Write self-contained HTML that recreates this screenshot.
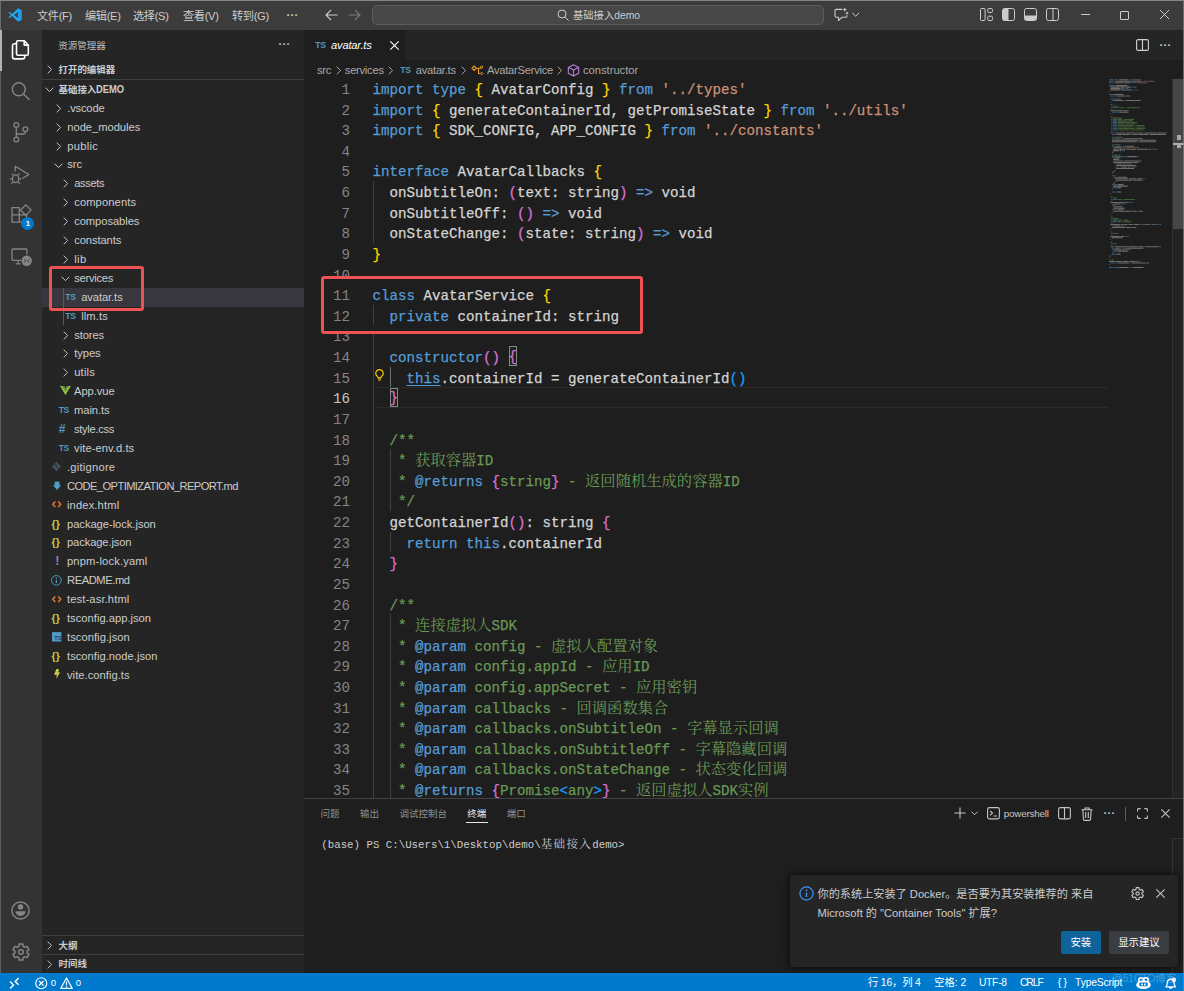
<!DOCTYPE html><html lang="zh-CN"><head><meta charset="utf-8"><title>avatar.ts - 基础接入demo</title><style>
*{box-sizing:border-box;margin:0;padding:0}
html,body{width:1184px;height:991px;overflow:hidden;background:#1e1e1e}
body{position:relative;font-family:"Liberation Sans","Noto Sans CJK SC",sans-serif;font-size:11.17px;color:#cccccc;-webkit-font-smoothing:antialiased}
.abs{position:absolute}
.t{position:absolute;white-space:pre;line-height:1}
svg{position:absolute;overflow:visible}
#titlebar{position:absolute;left:0;top:0;width:1184px;height:30px;background:#3c3c3c;border-top:1px solid #868686}
#activity{position:absolute;left:0;top:30px;width:42px;height:943px;background:#333333}
#sidebar{position:absolute;left:42px;top:30px;width:262px;height:943px;background:#252526}
#tabs{position:absolute;left:304px;top:30px;width:880px;height:30px;background:#252526}
#editor{position:absolute;left:304px;top:60px;width:880px;height:738px;background:#1e1e1e;overflow:hidden}
#panel{position:absolute;left:304px;top:798px;width:880px;height:174px;background:#1e1e1e;border-top:1px solid #424242}
#status{position:absolute;left:0;top:973px;width:1184px;height:18px;background:#007acc;color:#fff}
.menu{color:#cccccc;font-size:11.2px;letter-spacing:-0.35px}
.row{position:absolute;left:0;width:262px;height:18.9px}
.lbl{position:absolute;top:0;line-height:18.9px;white-space:pre;font-size:11.17px;color:#cccccc}
.code{position:absolute;left:68.6px;white-space:pre;font-family:"Liberation Mono","Noto Serif CJK SC",monospace;font-size:14.17px;line-height:20.6px;height:20.6px;color:#d4d4d4;-webkit-text-stroke:0.25px currentColor}
.ln{position:absolute;left:0;width:46px;text-align:right;font-family:"Liberation Mono",monospace;font-size:14.17px;line-height:20.6px;height:20.6px;color:#858585}
.k{color:#569cd6}.s{color:#ce9178}.c{color:#6a9955}.b1{color:#ffd700}.b2{color:#da70d6}.b3{color:#179fff}
.bm{outline:1px solid #888888;outline-offset:-1px;background:rgba(0,100,0,0.1);display:inline-block;height:19.6px;line-height:19.6px;vertical-align:top;margin-top:-1.6px;padding-top:1.6px}
.cj{font-family:"Liberation Mono","Noto Serif CJK SC",serif;font-size:15.3px;line-height:1;-webkit-text-stroke:0}
.ts{position:absolute;font-family:"Liberation Sans",sans-serif;font-weight:bold;font-size:8.5px;color:#519aba;line-height:18.9px;letter-spacing:-0.3px}
</style></head><body>
<div id="titlebar">
<svg style="left:7.5px;top:7px" width="14" height="14" viewBox="0 0 100 100"><path d="M71 3 L29 43 L11 29 L3 33 L21 50 L3 67 L11 71 L29 57 L71 97 L96 86 L96 14 Z M71 28 L71 72 L42 50 Z" fill="#23a9f2" fill-rule="evenodd"/><path d="M71 3 L96 14 L96 86 L71 97 Z" fill="#1f9cf0"/></svg>
<span class="t menu" style="left:37px;top:9.9px">文件(F)</span>
<span class="t menu" style="left:85px;top:9.9px">编辑(E)</span>
<span class="t menu" style="left:133px;top:9.9px">选择(S)</span>
<span class="t menu" style="left:183px;top:9.9px">查看(V)</span>
<span class="t menu" style="left:232px;top:9.9px">转到(G)</span>
<span class="t menu" style="left:286.5px;top:9px;letter-spacing:0.3px;font-weight:bold">···</span>
<svg style="left:325px;top:8px" width="13" height="12" viewBox="0 0 13 12"><path d="M12.5 6H1M6 1L1 6l5 5" fill="none" stroke="#cccccc" stroke-width="1.1"/></svg>
<svg style="left:348px;top:8px" width="13" height="12" viewBox="0 0 13 12"><path d="M0.5 6H12M7 1l5 5-5 5" fill="none" stroke="#7a7a7a" stroke-width="1.1"/></svg>
<div class="abs" style="left:372px;top:4px;width:452px;height:20px;border:1px solid #5c5c5c;border-radius:5px;background:#474747"></div>
<svg style="left:557px;top:8px" width="12" height="12" viewBox="0 0 12 12"><circle cx="5" cy="5" r="4" fill="none" stroke="#cccccc" stroke-width="1"/><path d="M8 8l3.5 3.5" stroke="#cccccc" stroke-width="1"/></svg>
<span class="t" style="left:573px;top:9.5px;font-size:10.3px;color:#cccccc">基础接入demo</span>
<svg style="left:834px;top:6.3px" width="26" height="15" viewBox="0 0 26 15"><path d="M8.3 2.4H2.2a1.2 1.2 0 0 0-1.2 1.2v5.5a1.2 1.2 0 0 0 1.2 1.2h2.3v3.2l3.4-3.2h3.9a1.2 1.2 0 0 0 1.2-1.2V8.3" fill="none" stroke="#cccccc" stroke-width="1.1" stroke-linejoin="round"/><path d="M10.8 0.6l.6 1.5 1.5.6-1.5.6-.6 1.5-.6-1.5-1.5-.6 1.5-.6zM13 4.3l.5 1.3 1.3.5-1.3.5-.5 1.3-.5-1.3-1.3-.5 1.3-.5z" fill="#e0e0e0"/><path d="M18.3 5.9l3.4 3.3 3.4-3.3" fill="none" stroke="#cccccc" stroke-width="1"/></svg>
<svg style="left:979.5px;top:6.8px" width="13" height="13" viewBox="0 0 13 13"><rect x="0.5" y="0.5" width="4.6" height="12" rx="1" fill="none" stroke="#cccccc"/><rect x="7.8" y="0.5" width="4.6" height="4" rx="1" fill="none" stroke="#cccccc"/><rect x="7.8" y="8.2" width="4.6" height="4.3" rx="1" fill="none" stroke="#cccccc"/></svg>
<svg style="left:1001.8px;top:6.8px" width="13" height="13" viewBox="0 0 13 13"><rect x="0.5" y="0.5" width="12" height="12" rx="2" fill="none" stroke="#cccccc"/><path d="M1 2a1.5 1.5 0 0 1 1.5-1.5H6.5v12H2.5A1.5 1.5 0 0 1 1 11z" fill="#cccccc"/></svg>
<svg style="left:1024px;top:6.8px" width="13" height="13" viewBox="0 0 13 13"><rect x="0.5" y="0.5" width="12" height="12" rx="2" fill="none" stroke="#cccccc"/><path d="M0.5 7.5h12v3a1.5 1.5 0 0 1-1.5 1.5H2a1.5 1.5 0 0 1-1.5-1.5z" fill="#cccccc"/></svg>
<svg style="left:1046.4px;top:6.8px" width="13" height="13" viewBox="0 0 13 13"><rect x="0.5" y="0.5" width="12" height="12" rx="2" fill="none" stroke="#cccccc"/><path d="M7 0.5v12" stroke="#cccccc"/></svg>
<div class="abs" style="left:1081px;top:13px;width:9px;height:1px;background:#cccccc"></div>
<div class="abs" style="left:1120.3px;top:9.6px;width:9px;height:9px;border:1px solid #cccccc;border-radius:1px"></div>
<svg style="left:1160px;top:9.4px" width="9" height="9" viewBox="0 0 9 9"><path d="M0 0l9 9M9 0l-9 9" stroke="#cccccc" stroke-width="1"/></svg>
</div>
<div class="abs" style="left:0;top:1px;width:1px;height:29px;background:#6a6a6a"></div>
<div id="activity">
<div class="abs" style="left:0;top:0;width:1px;height:943px;background:#5e5e5e"></div><div class="abs" style="left:0;top:0;width:2px;height:41px;background:#b4b4b4"></div>
<svg style="left:11px;top:9px" width="19" height="22" viewBox="0 0 19 22"><path d="M7 1.8h6.3l4 4.2v8.9a1.3 1.3 0 0 1-1.3 1.3H7a1.5 1.5 0 0 1-1.5-1.5V3.3A1.5 1.5 0 0 1 7 1.8zM13.2 2v4.1h4" fill="none" stroke="#ffffff" stroke-width="1.6" stroke-linejoin="round"/><path d="M5.3 4.7H3.6a2.1 2.1 0 0 0-2.1 2.1v11a2.1 2.1 0 0 0 2.1 2.1h8a2.1 2.1 0 0 0 2.1-2.1v-1.5" fill="none" stroke="#ffffff" stroke-width="1.6"/></svg>
<svg style="left:10px;top:50px" width="22" height="22" viewBox="10 50 22 22"><circle cx="18.8" cy="59.3" r="6.5" fill="none" stroke="#858585" stroke-width="1.4"/><path d="M23.5 64l6.1 6.1" stroke="#858585" stroke-width="1.4"/></svg>
<svg style="left:10px;top:90px" width="22" height="24" viewBox="10 90 22 24"><circle cx="16.3" cy="95" r="2.4" fill="none" stroke="#858585" stroke-width="1.3"/><circle cx="16.3" cy="109.6" r="2.4" fill="none" stroke="#858585" stroke-width="1.3"/><circle cx="25.4" cy="99.3" r="2.4" fill="none" stroke="#858585" stroke-width="1.3"/><path d="M16.3 97.4v9.8M25.4 101.7v0.3a2 2 0 0 1-2 2H16.3" fill="none" stroke="#858585" stroke-width="1.3"/></svg>
<svg style="left:9px;top:135px" width="22" height="20" viewBox="0 0 22 20"><path d="M6.2 6.5V1.2l13.6 8.3-6.5 4" fill="none" stroke="#858585" stroke-width="1.3" stroke-linejoin="round"/><ellipse cx="6.6" cy="13.8" rx="3.1" ry="3.9" fill="none" stroke="#858585" stroke-width="1.3"/><path d="M4.2 10.2L2.6 8.6M9 10.2l1.6-1.6M3.4 13.8H0.8M12.4 13.8H9.8M4 16.8l-1.8 1.8M9.2 16.8l1.8 1.8" stroke="#858585" stroke-width="1.2" fill="none"/></svg>
<svg style="left:11px;top:174px" width="22" height="22" viewBox="0 0 22 22"><path d="M1 3.6h7.3v7.3H1zM1 10.9h7.3v7.3H1zM8.3 10.9h7.3v7.3H8.3z" fill="none" stroke="#858585" stroke-width="1.3"/><path d="M14.8 0.9l5.2 5.2-5.2 5.2-5.2-5.2z" fill="none" stroke="#858585" stroke-width="1.3"/></svg>
<div class="abs" style="left:20.7px;top:186.5px;width:13.6px;height:13.6px;border-radius:7px;background:#007acc"></div>
<span class="t" style="left:25.7px;top:189.5px;font-size:7.8px;font-weight:bold;color:#fff">1</span>
<svg style="left:10.5px;top:218px" width="22" height="19" viewBox="0 0 22 19"><path d="M10 12.4H2.2A1.2 1.2 0 0 1 1 11.2V2.2A1.2 1.2 0 0 1 2.2 1h12.6A1.2 1.2 0 0 1 16 2.2V6.5M4.5 15.8h5M7.2 12.5v3.2" fill="none" stroke="#858585" stroke-width="1.3"/><circle cx="15.7" cy="12.8" r="5.2" fill="#858585"/><path d="M13.2 11.2l1.7 1.6-1.7 1.6M18.2 11.2l-1.7 1.6 1.7 1.6" fill="none" stroke="#333" stroke-width="0.9"/></svg>
<svg style="left:11.3px;top:870.7px" width="19" height="19" viewBox="0 0 19 19"><circle cx="9.5" cy="9.5" r="8.6" fill="none" stroke="#858585" stroke-width="1.5"/><circle cx="9.5" cy="6" r="2.7" fill="#858585"/><path d="M4.4 10.3h10.2a5.1 4.7 0 0 1-10.2 0z" fill="#858585"/></svg>
<svg style="left:11.6px;top:912.9px" width="18" height="18" viewBox="0 0 18 18"><path d="M6.81 3.31L7.13 0.91L10.87 0.91L11.19 3.31L12.84 4.26L15.07 3.34L16.94 6.57L15.02 8.05L15.02 9.95L16.94 11.43L15.07 14.66L12.84 13.74L11.19 14.69L10.87 17.09L7.13 17.09L6.81 14.69L5.16 13.74L2.93 14.66L1.06 11.43L2.98 9.95L2.98 8.05L1.06 6.57L2.93 3.34L5.16 4.26z" fill="none" stroke="#858585" stroke-width="1.5" stroke-linejoin="round"/><circle cx="9" cy="9" r="2.3" fill="none" stroke="#858585" stroke-width="1.4"/></svg>
</div>
<div id="sidebar">
<span class="t" style="left:16.3px;top:11px;font-size:9.5px;color:#bbbbbb">资源管理器</span>
<span class="t" style="left:236.5px;top:8.5px;font-size:11px;color:#c5c5c5;letter-spacing:0.3px;font-weight:bold">···</span>
<svg style="left:5px;top:35px" width="6" height="9" viewBox="0 0 6 9"><path d="M0.7 0.6l3.9 3.9-3.9 3.9" fill="none" stroke="#c5c5c5" stroke-width="1"/></svg>
<span class="t" style="left:16.5px;top:34.8px;font-size:9.45px;font-weight:bold;color:#cccccc">打开的编辑器</span>
<div class="abs" style="left:0;top:49px;width:262px;height:1px;background:#3f3f41"></div>
<svg style="left:2.6px;top:56.7px" width="9" height="6" viewBox="0 0 9 6"><path d="M0.6 0.7l3.9 3.9 3.9-3.9" fill="none" stroke="#c5c5c5" stroke-width="1"/></svg>
<span class="t" style="left:16.5px;top:54.2px;font-size:9.45px;font-weight:bold;color:#cccccc">基础接入<span style="display:inline-block;font-size:10.9px;transform:scaleX(0.86);transform-origin:left bottom;line-height:1">DEMO</span></span>
<div class="row" style="top:68.7px;">
<svg style="left:14px;top:5px" width="6" height="9" viewBox="0 0 6 9"><path d="M0.7 0.6l3.9 3.9-3.9 3.9" fill="none" stroke="#c5c5c5" stroke-width="1"/></svg>
<span class="lbl" style="left:25.3px;letter-spacing:-0.19px">.vscode</span>
</div>
<div class="row" style="top:87.6px;">
<svg style="left:14px;top:5px" width="6" height="9" viewBox="0 0 6 9"><path d="M0.7 0.6l3.9 3.9-3.9 3.9" fill="none" stroke="#c5c5c5" stroke-width="1"/></svg>
<span class="lbl" style="left:25.3px;letter-spacing:-0.02px">node_modules</span>
</div>
<div class="row" style="top:106.5px;">
<svg style="left:14px;top:5px" width="6" height="9" viewBox="0 0 6 9"><path d="M0.7 0.6l3.9 3.9-3.9 3.9" fill="none" stroke="#c5c5c5" stroke-width="1"/></svg>
<span class="lbl" style="left:25.3px;letter-spacing:0.28px">public</span>
</div>
<div class="row" style="top:125.4px;">
<svg style="left:11.6px;top:7.2px" width="9" height="6" viewBox="0 0 9 6"><path d="M0.6 0.7l3.9 3.9 3.9-3.9" fill="none" stroke="#c5c5c5" stroke-width="1"/></svg>
<span class="lbl" style="left:25.3px;letter-spacing:-0.1px">src</span>
</div>
<div class="row" style="top:144.3px;">
<svg style="left:20.9px;top:5px" width="6" height="9" viewBox="0 0 6 9"><path d="M0.7 0.6l3.9 3.9-3.9 3.9" fill="none" stroke="#c5c5c5" stroke-width="1"/></svg>
<span class="lbl" style="left:32.2px;letter-spacing:-0.35px">assets</span>
</div>
<div class="row" style="top:163.2px;">
<svg style="left:20.9px;top:5px" width="6" height="9" viewBox="0 0 6 9"><path d="M0.7 0.6l3.9 3.9-3.9 3.9" fill="none" stroke="#c5c5c5" stroke-width="1"/></svg>
<span class="lbl" style="left:32.2px;letter-spacing:0.12px">components</span>
</div>
<div class="row" style="top:182.1px;">
<svg style="left:20.9px;top:5px" width="6" height="9" viewBox="0 0 6 9"><path d="M0.7 0.6l3.9 3.9-3.9 3.9" fill="none" stroke="#c5c5c5" stroke-width="1"/></svg>
<span class="lbl" style="left:32.2px;letter-spacing:-0.05px">composables</span>
</div>
<div class="row" style="top:201px;">
<svg style="left:20.9px;top:5px" width="6" height="9" viewBox="0 0 6 9"><path d="M0.7 0.6l3.9 3.9-3.9 3.9" fill="none" stroke="#c5c5c5" stroke-width="1"/></svg>
<span class="lbl" style="left:32.2px;letter-spacing:-0.08px">constants</span>
</div>
<div class="row" style="top:219.9px;">
<svg style="left:20.9px;top:5px" width="6" height="9" viewBox="0 0 6 9"><path d="M0.7 0.6l3.9 3.9-3.9 3.9" fill="none" stroke="#c5c5c5" stroke-width="1"/></svg>
<span class="lbl" style="left:32.2px;letter-spacing:0.37px">lib</span>
</div>
<div class="row" style="top:238.8px;">
<svg style="left:18.5px;top:7.2px" width="9" height="6" viewBox="0 0 9 6"><path d="M0.6 0.7l3.9 3.9 3.9-3.9" fill="none" stroke="#c5c5c5" stroke-width="1"/></svg>
<span class="lbl" style="left:32.2px;letter-spacing:-0.27px">services</span>
</div>
<div class="row" style="top:257.7px;background:#37373d;">
<span class="ts" style="left:23.3px;top:0.3px">TS</span>
<span class="lbl" style="left:39.2px;letter-spacing:-0.08px">avatar.ts</span>
</div>
<div class="row" style="top:276.6px;">
<span class="ts" style="left:23.3px;top:0.3px">TS</span>
<span class="lbl" style="left:39.2px;letter-spacing:0.1px">llm.ts</span>
</div>
<div class="row" style="top:295.5px;">
<svg style="left:20.9px;top:5px" width="6" height="9" viewBox="0 0 6 9"><path d="M0.7 0.6l3.9 3.9-3.9 3.9" fill="none" stroke="#c5c5c5" stroke-width="1"/></svg>
<span class="lbl" style="left:32.2px;letter-spacing:-0.08px">stores</span>
</div>
<div class="row" style="top:314.4px;">
<svg style="left:20.9px;top:5px" width="6" height="9" viewBox="0 0 6 9"><path d="M0.7 0.6l3.9 3.9-3.9 3.9" fill="none" stroke="#c5c5c5" stroke-width="1"/></svg>
<span class="lbl" style="left:32.2px;letter-spacing:-0.04px">types</span>
</div>
<div class="row" style="top:333.3px;">
<svg style="left:20.9px;top:5px" width="6" height="9" viewBox="0 0 6 9"><path d="M0.7 0.6l3.9 3.9-3.9 3.9" fill="none" stroke="#c5c5c5" stroke-width="1"/></svg>
<span class="lbl" style="left:32.2px;letter-spacing:0.2px">utils</span>
</div>
<div class="row" style="top:352.2px;">
<svg style="left:17.9px;top:3.8px" width="10.9" height="9.1" viewBox="0 0 12 10"><path d="M0 0h2.6L6 5.8 9.4 0H12L6 10z" fill="#8dc149"/><path d="M2.6 0h2L6 2.4 7.4 0h2L6 5.8z" fill="#6a9a36"/></svg>
<span class="lbl" style="left:32.1px;letter-spacing:-0.06px">App.vue</span>
</div>
<div class="row" style="top:371.1px;">
<span class="ts" style="left:16.700000000000003px;top:0.3px">TS</span>
<span class="lbl" style="left:32.1px;letter-spacing:-0.09px">main.ts</span>
</div>
<div class="row" style="top:390px;">
<span class="abs" style="left:16.8px;top:0;line-height:18.9px;font-size:12px;font-weight:bold;color:#519aba;font-family:"Liberation Sans",sans-serif;white-space:pre;font-style:italic;top:-0.3px;transform:scaleX(1.15);transform-origin:left">#</span>
<span class="lbl" style="left:32.1px;letter-spacing:-0.33px">style.css</span>
</div>
<div class="row" style="top:408.9px;">
<span class="ts" style="left:16.700000000000003px;top:0.3px">TS</span>
<span class="lbl" style="left:32.1px;letter-spacing:0.06px">vite-env.d.ts</span>
</div>
<div class="row" style="top:427.8px;">
<svg style="left:10px;top:4.5px" width="9.1" height="9.1" viewBox="0 0 10 10"><path d="M5 0l5 5-5 5-5-5z" fill="#43565f"/><circle cx="3.8" cy="3.7" r="0.9" fill="#252526"/><circle cx="6.3" cy="6.2" r="0.9" fill="#252526"/><path d="M3.8 3.7l2.5 2.5M5 5V2.6" stroke="#252526" stroke-width="0.7"/></svg>
<span class="lbl" style="left:25px;letter-spacing:0.24px">.gitignore</span>
</div>
<div class="row" style="top:446.7px;">
<svg style="left:10.7px;top:4.4px" width="8.1" height="9.1" viewBox="0 0 8 9"><path d="M1.6 0l1.2 1.3L4 0l1.2 1.3L6.4 0v4.2H8L4 9 0 4.2h1.6z" fill="#4f9fc9"/></svg>
<span class="lbl" style="left:25px;letter-spacing:-0.59px">CODE_OPTIMIZATION_REPORT.md</span>
</div>
<div class="row" style="top:465.6px;">
<svg style="left:10px;top:5.7px" width="9.5" height="6.4" viewBox="0 0 9.5 6.4"><path d="M3.3 0.5L0.8 3.2l2.5 2.7M6.2 0.5L8.7 3.2 6.2 5.9" fill="none" stroke="#e37933" stroke-width="1.5"/></svg>
<span class="lbl" style="left:25px;letter-spacing:0.14px">index.html</span>
</div>
<div class="row" style="top:484.5px;">
<span class="abs" style="left:9.6px;top:0;line-height:18.9px;font-size:10.5px;font-weight:bold;color:#cbcb41;font-family:"Liberation Sans",sans-serif;white-space:pre;letter-spacing:1.8px;top:-0.8px">{}</span>
<span class="lbl" style="left:25px;letter-spacing:-0.03px">package-lock.json</span>
</div>
<div class="row" style="top:503.4px;">
<span class="abs" style="left:9.6px;top:0;line-height:18.9px;font-size:10.5px;font-weight:bold;color:#cbcb41;font-family:"Liberation Sans",sans-serif;white-space:pre;letter-spacing:1.8px;top:-0.8px">{}</span>
<span class="lbl" style="left:25px;letter-spacing:-0.11px">package.json</span>
</div>
<div class="row" style="top:522.3px;">
<span class="abs" style="left:13.2px;top:0;line-height:18.9px;font-size:12.5px;font-weight:bold;color:#a074c4;font-family:"Liberation Sans",sans-serif;white-space:pre;font-style:italic;top:-0.3px">!</span>
<span class="lbl" style="left:25px;letter-spacing:0.16px">pnpm-lock.yaml</span>
</div>
<div class="row" style="top:541.2px;">
<svg style="left:9px;top:3.7px" width="10.7" height="10.7" viewBox="0 0 12 12"><circle cx="6" cy="6" r="5.4" fill="none" stroke="#519aba" stroke-width="1.1"/><path d="M6 5.2v3.8" stroke="#519aba" stroke-width="1.4"/><circle cx="6" cy="3.3" r="0.85" fill="#519aba"/></svg>
<span class="lbl" style="left:25px;letter-spacing:-0.42px">README.md</span>
</div>
<div class="row" style="top:560.1px;">
<svg style="left:10px;top:5.7px" width="9.5" height="6.4" viewBox="0 0 9.5 6.4"><path d="M3.3 0.5L0.8 3.2l2.5 2.7M6.2 0.5L8.7 3.2 6.2 5.9" fill="none" stroke="#e37933" stroke-width="1.5"/></svg>
<span class="lbl" style="left:25px;letter-spacing:0.13px">test-asr.html</span>
</div>
<div class="row" style="top:579px;">
<span class="abs" style="left:9.6px;top:0;line-height:18.9px;font-size:10.5px;font-weight:bold;color:#cbcb41;font-family:"Liberation Sans",sans-serif;white-space:pre;letter-spacing:1.8px;top:-0.8px">{}</span>
<span class="lbl" style="left:25px;letter-spacing:0.02px">tsconfig.app.json</span>
</div>
<div class="row" style="top:597.9px;">
<svg style="left:9.9px;top:4.3px" width="9.4" height="9.6" viewBox="0 0 10 10"><rect x="0" y="0" width="10" height="10" fill="#4f9bc6"/></svg><span class="abs" style="left:12.3px;top:8.3px;font-size:5.8px;font-weight:bold;color:#1f4458;line-height:1;font-family:'Liberation Sans',sans-serif;letter-spacing:-0.2px">TS</span>
<span class="lbl" style="left:25px;letter-spacing:0.06px">tsconfig.json</span>
</div>
<div class="row" style="top:616.8px;">
<span class="abs" style="left:9.6px;top:0;line-height:18.9px;font-size:10.5px;font-weight:bold;color:#cbcb41;font-family:"Liberation Sans",sans-serif;white-space:pre;letter-spacing:1.8px;top:-0.8px">{}</span>
<span class="lbl" style="left:25px;letter-spacing:0.03px">tsconfig.node.json</span>
</div>
<div class="row" style="top:635.7px;">
<svg style="left:12.4px;top:3.8px" width="6.1" height="10" viewBox="0 0 6 10"><path d="M2.3 0L5 0.2 4.2 3.3H6L2.2 10l.5-4.3H0z" fill="#cbcb41"/></svg>
<span class="lbl" style="left:25px;letter-spacing:0.04px">vite.config.ts</span>
</div>
<div class="abs" style="left:20.5px;top:257.7px;width:1px;height:37.8px;background:#585858"></div>
<div class="abs" style="left:0;top:904.5px;width:262px;height:1px;background:#3f3f41"></div>
<svg style="left:5px;top:910.5px" width="6" height="9" viewBox="0 0 6 9"><path d="M0.7 0.6l3.9 3.9-3.9 3.9" fill="none" stroke="#c5c5c5" stroke-width="1"/></svg>
<span class="t" style="left:16.5px;top:910.7px;font-size:9.45px;font-weight:bold;color:#cccccc">大纲</span>
<div class="abs" style="left:0;top:924px;width:262px;height:1px;background:#3f3f41"></div>
<svg style="left:5px;top:929.8px" width="6" height="9" viewBox="0 0 6 9"><path d="M0.7 0.6l3.9 3.9-3.9 3.9" fill="none" stroke="#c5c5c5" stroke-width="1"/></svg>
<span class="t" style="left:16.5px;top:929.4px;font-size:9.45px;font-weight:bold;color:#cccccc">时间线</span>
</div>
<div id="tabs">
<div class="abs" style="left:0;top:0;width:102px;height:30px;background:#1e1e1e"></div>
<span class="ts" style="left:11.3px;top:6.3px">TS</span>
<span class="t" style="left:27px;top:9.5px;font-size:11.17px;font-style:italic;letter-spacing:-0.2px;color:#ffffff">avatar.ts</span>
<svg style="left:85.5px;top:10.5px" width="9" height="9" viewBox="0 0 9 9"><path d="M0.3 0.3l8.4 8.4M8.7 0.3l-8.4 8.4" stroke="#ffffff" stroke-width="1.1"/></svg>
<svg style="left:832px;top:9px" width="13" height="12" viewBox="0 0 13 12"><rect x="0.6" y="0.6" width="11.8" height="10.8" rx="1.5" fill="none" stroke="#d0d0d0" stroke-width="1.1"/><path d="M6.5 0.6v10.8" stroke="#d0d0d0" stroke-width="1.1"/></svg>
<span class="t" style="left:855.5px;top:9.5px;font-size:11px;color:#d0d0d0;letter-spacing:0.3px;font-weight:bold">···</span>
</div>
<div id="editor">
<span class="t" style="left:13px;top:4.8px;font-size:11.17px;color:#a9a9a9;letter-spacing:-0.25px">src</span>
<svg style="left:32px;top:6.3px" width="6" height="9" viewBox="0 0 6 9"><path d="M0.7 0.6l3.9 3.9-3.9 3.9" fill="none" stroke="#a9a9a9" stroke-width="1"/></svg>
<span class="t" style="left:40.8px;top:4.8px;font-size:11.17px;color:#a9a9a9;letter-spacing:-0.25px">services</span>
<svg style="left:83.5px;top:6.3px" width="6" height="9" viewBox="0 0 6 9"><path d="M0.7 0.6l3.9 3.9-3.9 3.9" fill="none" stroke="#a9a9a9" stroke-width="1"/></svg>
<span class="ts" style="left:96.3px;top:1.1px">TS</span>
<span class="t" style="left:111.8px;top:4.8px;font-size:11.17px;color:#a9a9a9;letter-spacing:-0.25px">avatar.ts</span>
<svg style="left:156.5px;top:6.3px" width="6" height="9" viewBox="0 0 6 9"><path d="M0.7 0.6l3.9 3.9-3.9 3.9" fill="none" stroke="#a9a9a9" stroke-width="1"/></svg>
<svg style="left:167px;top:4.5px" width="13" height="12" viewBox="0 0 13 12"><path d="M1 3.2l2.2-2.2 2.2 2.2-2.2 2.2zM5.4 3.2h5M7.5 3.2v5.3h1.8" fill="none" stroke="#ee9d28" stroke-width="1.1"/><path d="M9.3 2l1.3-1.3 1.3 1.3-1.3 1.3zM9.3 8.5l1.3-1.3 1.3 1.3-1.3 1.3z" fill="none" stroke="#ee9d28" stroke-width="1"/></svg>
<span class="t" style="left:183px;top:4.8px;font-size:11.17px;color:#a9a9a9;letter-spacing:-0.25px">AvatarService</span>
<svg style="left:252.5px;top:6.3px" width="6" height="9" viewBox="0 0 6 9"><path d="M0.7 0.6l3.9 3.9-3.9 3.9" fill="none" stroke="#a9a9a9" stroke-width="1"/></svg>
<svg style="left:263px;top:4px" width="13" height="13" viewBox="0 0 13 13"><path d="M6.5 0.8l5.2 2.6v5.8l-5.2 2.9-5.2-2.9V3.4z M1.5 3.5l5 2.6 5-2.6M6.5 6.1v5.8" fill="none" stroke="#b180d7" stroke-width="1.1" stroke-linejoin="round"/></svg>
<span class="t" style="left:279px;top:4.8px;font-size:11.17px;color:#a9a9a9;letter-spacing:0px">constructor</span>
<div class="abs" style="left:69px;top:327.2px;width:735px;height:20.62px;border-top:1px solid #2a2a2a;border-bottom:1px solid #2a2a2a"></div>
<div class="abs" style="left:69px;top:121px;width:1px;height:61.9px;background:#404040"></div>
<div class="abs" style="left:69px;top:244.7px;width:1px;height:494.9px;background:#404040"></div>
<div class="abs" style="left:86px;top:306.6px;width:1px;height:20.6px;background:#707070"></div>
<div class="abs" style="left:86px;top:389.1px;width:1px;height:61.9px;background:#404040"></div>
<div class="abs" style="left:86px;top:471.5px;width:1px;height:20.6px;background:#404040"></div>
<div class="abs" style="left:86px;top:554px;width:1px;height:185.6px;background:#404040"></div>
<div class="ln" style="top:20px;color:#858585">1</div><div class="code" style="top:20px"><span class="k">import</span> <span class="k">type</span> <span class="b1">{</span> AvatarConfig <span class="b1">}</span> <span class="k">from</span> <span class="s">&#x27;../types&#x27;</span></div>
<div class="ln" style="top:40.62px;color:#858585">2</div><div class="code" style="top:40.62px"><span class="k">import</span> <span class="b1">{</span> generateContainerId, getPromiseState <span class="b1">}</span> <span class="k">from</span> <span class="s">&#x27;../utils&#x27;</span></div>
<div class="ln" style="top:61.24px;color:#858585">3</div><div class="code" style="top:61.24px"><span class="k">import</span> <span class="b1">{</span> SDK_CONFIG, APP_CONFIG <span class="b1">}</span> <span class="k">from</span> <span class="s">&#x27;../constants&#x27;</span></div>
<div class="ln" style="top:81.86px;color:#858585">4</div><div class="code" style="top:81.86px"></div>
<div class="ln" style="top:102.48px;color:#858585">5</div><div class="code" style="top:102.48px"><span class="k">interface</span> AvatarCallbacks <span class="b1">{</span></div>
<div class="ln" style="top:123.1px;color:#858585">6</div><div class="code" style="top:123.1px">  onSubtitleOn: <span class="b2">(</span>text: string<span class="b2">)</span> <span class="k">=&gt;</span> void</div>
<div class="ln" style="top:143.72px;color:#858585">7</div><div class="code" style="top:143.72px">  onSubtitleOff: <span class="b2">()</span> <span class="k">=&gt;</span> void</div>
<div class="ln" style="top:164.34px;color:#858585">8</div><div class="code" style="top:164.34px">  onStateChange: <span class="b2">(</span>state: string<span class="b2">)</span> <span class="k">=&gt;</span> void</div>
<div class="ln" style="top:184.96px;color:#858585">9</div><div class="code" style="top:184.96px"><span class="b1">}</span></div>
<div class="ln" style="top:205.58px;color:#858585">10</div><div class="code" style="top:205.58px"></div>
<div class="ln" style="top:267.44px;color:#858585">13</div><div class="code" style="top:267.44px"></div>
<div class="ln" style="top:288.06px;color:#858585">14</div><div class="code" style="top:288.06px">  <span class="k">constructor</span><span class="b2">()</span> <span class="bm"><span class="b2">{</span></span></div>
<div class="ln" style="top:308.68px;color:#858585">15</div><div class="code" style="top:308.68px">    <span class="k" style="text-decoration:underline;text-underline-offset:2px">this</span>.containerId = generateContainerId<span class="b3">()</span></div>
<div class="ln" style="top:329.3px;color:#c6c6c6">16</div><div class="code" style="top:329.3px">  <span class="bm"><span class="b2">}</span></span></div>
<div class="ln" style="top:349.92px;color:#858585">17</div><div class="code" style="top:349.92px"></div>
<div class="ln" style="top:370.54px;color:#858585">18</div><div class="code" style="top:370.54px">  <span class="c">/**</span></div>
<div class="ln" style="top:391.16px;color:#858585">19</div><div class="code" style="top:391.16px">  <span class="c"> * <span class="cj">获取容器</span>ID</span></div>
<div class="ln" style="top:411.78px;color:#858585">20</div><div class="code" style="top:411.78px">  <span class="c"> * </span><span class="k">@returns</span><span class="c"> </span><span class="b2">{</span><span class="c">string</span><span class="b2">}</span><span class="c"> - <span class="cj">返回随机生成的容器</span>ID</span></div>
<div class="ln" style="top:432.4px;color:#858585">21</div><div class="code" style="top:432.4px">  <span class="c"> */</span></div>
<div class="ln" style="top:453.02px;color:#858585">22</div><div class="code" style="top:453.02px">  getContainerId<span class="b2">()</span>: string <span class="b2">{</span></div>
<div class="ln" style="top:473.64px;color:#858585">23</div><div class="code" style="top:473.64px">    <span class="k">return</span> <span class="k">this</span>.containerId</div>
<div class="ln" style="top:494.26px;color:#858585">24</div><div class="code" style="top:494.26px">  <span class="b2">}</span></div>
<div class="ln" style="top:514.88px;color:#858585">25</div><div class="code" style="top:514.88px"></div>
<div class="ln" style="top:535.5px;color:#858585">26</div><div class="code" style="top:535.5px">  <span class="c">/**</span></div>
<div class="ln" style="top:556.12px;color:#858585">27</div><div class="code" style="top:556.12px">  <span class="c"> * <span class="cj">连接虚拟人</span>SDK</span></div>
<div class="ln" style="top:576.74px;color:#858585">28</div><div class="code" style="top:576.74px">  <span class="c"> * </span><span class="k">@param</span><span class="c"> config - <span class="cj">虚拟人配置对象</span></span></div>
<div class="ln" style="top:597.36px;color:#858585">29</div><div class="code" style="top:597.36px">  <span class="c"> * </span><span class="k">@param</span><span class="c"> config.appId - <span class="cj">应用</span>ID</span></div>
<div class="ln" style="top:617.98px;color:#858585">30</div><div class="code" style="top:617.98px">  <span class="c"> * </span><span class="k">@param</span><span class="c"> config.appSecret - <span class="cj">应用密钥</span></span></div>
<div class="ln" style="top:638.6px;color:#858585">31</div><div class="code" style="top:638.6px">  <span class="c"> * </span><span class="k">@param</span><span class="c"> callbacks - <span class="cj">回调函数集合</span></span></div>
<div class="ln" style="top:659.22px;color:#858585">32</div><div class="code" style="top:659.22px">  <span class="c"> * </span><span class="k">@param</span><span class="c"> callbacks.onSubtitleOn - <span class="cj">字幕显示回调</span></span></div>
<div class="ln" style="top:679.84px;color:#858585">33</div><div class="code" style="top:679.84px">  <span class="c"> * </span><span class="k">@param</span><span class="c"> callbacks.onSubtitleOff - <span class="cj">字幕隐藏回调</span></span></div>
<div class="ln" style="top:700.46px;color:#858585">34</div><div class="code" style="top:700.46px">  <span class="c"> * </span><span class="k">@param</span><span class="c"> callbacks.onStateChange - <span class="cj">状态变化回调</span></span></div>
<div class="ln" style="top:721.08px;color:#858585">35</div><div class="code" style="top:721.08px">  <span class="c"> * </span><span class="k">@returns</span><span class="c"> </span><span class="b2">{</span><span class="c">Promise</span><span class="b3">&lt;</span><span class="c">any</span><span class="b3">&gt;</span><span class="b2">}</span><span class="c"> - <span class="cj">返回虚拟人</span>SDK<span class="cj">实例</span></span></div>
<div class="abs" style="left:17.3px;top:215.5px;width:322px;height:58px;border:3px solid #ee5253;border-radius:3px;background:#1e1e1e"></div>
<div class="abs" style="left:69px;top:244.7px;width:1px;height:20.6px;background:#404040"></div>
<div class="ln" style="top:226.2px;color:#858585">11</div><div class="code" style="top:226.2px"><span class="k">class</span> AvatarService <span class="b1">{</span></div>
<div class="ln" style="top:246.82px;color:#858585">12</div><div class="code" style="top:246.82px">  <span class="k">private</span> containerId: string</div>
<svg style="left:71px;top:309px" width="9" height="12" viewBox="0 0 9 12"><path d="M4.5 0.6a3.7 3.7 0 0 0-2.3 6.6c.5.5.8 1 .8 1.6h3c0-.6.3-1.1.8-1.6A3.7 3.7 0 0 0 4.5.6z" fill="none" stroke="#ffcc00" stroke-width="1.1"/><path d="M3 9.8h3M3.4 11.2h2.2" stroke="#ffcc00" stroke-width="1"/></svg>
<svg style="left:805px;top:19px" width="64" height="192" viewBox="0 0 64 192"><path d="M0 0.7h4.3M5 0.7h2.9M20.9 0.7h2.9M0 2.2h4.3M34.6 2.2h2.9M0 3.7h4.3M24.5 3.7h2.9M0 6.6h6.5M22.3 8.1h1.4M24.5 8.1h2.9M14.4 9.6h1.4M16.6 9.6h2.9M23.8 11h1.4M25.9 11h2.9M0 15.5h3.6M1.4 17h5M1.4 19.9h7.9M2.9 21.4h2.9M3.6 28.8h5.8M2.9 33.2h4.3M7.9 33.2h2.9M3.6 40.6h4.3M3.6 42.1h4.3M3.6 43.6h4.3M3.6 45h4.3M3.6 46.5h4.3M3.6 48h4.3M3.6 49.5h4.3M3.6 51h5.8M1.4 53.9h3.6M2.9 55.4h3.6M2.9 59.8h3.6M11.5 59.8h2.2M2.9 67.2h3.6M13.7 67.2h2.2M43.2 70.2h2.9M13 71.6h1.4M2.9 77.6h3.6M11.5 77.6h3.6M15.8 77.6h2.9M5.8 84.9h1.4M7.2 87.9h2.9M10.8 87.9h1.4M2.9 96.8h2.2M4.3 98.2h3.6M33.8 99.7h1.4M4.3 105.6h3.6M4.3 108.6h3.6M2.9 113h4.3M3.6 120.4h4.3M19.4 123.4h2.9M2.9 124.9h1.4M12.2 124.9h4.3M2.9 126.3h2.2M4.3 130.8h3.6M3.6 141.1h4.3M3.6 142.6h4.3M32.4 145.5h2.9M42.5 145.5h2.9M47.5 145.5h2.9M2.9 147h1.4M12.2 147h4.3M15.8 157.4h2.9M1.4 167.7h3.6M2.9 169.2h3.6M13 169.2h3.6M2.9 170.7h1.4M4.3 172.1h3.6M2.9 175.1h4.3M25.9 182.5h2.9M1.4 184h4.3M6.5 184h2.2M20.9 184h1.4M0 188.4h4.3M5 188.4h3.6M20.9 188.4h2.2" stroke="#3f6d94" stroke-width="1.05" fill="none" opacity="0.75"/><path d="M8.6 0.7h0.7M10.1 0.7h8.6M19.4 0.7h0.7M5 2.2h0.7M6.5 2.2h13.7M20.2 2.2h0.7M21.6 2.2h10.8M33.1 2.2h0.7M5 3.7h0.7M6.5 3.7h7.2M13.7 3.7h0.7M15.1 3.7h7.2M23 3.7h0.7M7.2 6.6h10.8M18.7 6.6h0.7M1.4 8.1h8.6M10.1 8.1h0.7M11.5 8.1h0.7M12.2 8.1h2.9M15.1 8.1h0.7M16.6 8.1h4.3M20.9 8.1h0.7M1.4 9.6h9.4M10.8 9.6h0.7M12.2 9.6h1.4M1.4 11h9.4M10.8 11h0.7M12.2 11h0.7M13 11h3.6M16.6 11h0.7M18 11h4.3M22.3 11h0.7M0 12.5h0.7M4.3 15.5h9.4M14.4 15.5h0.7M7.2 17h7.9M15.1 17h0.7M16.6 17h4.3M9.4 19.9h1.4M11.5 19.9h0.7M5.8 21.4h0.7M6.5 21.4h7.9M15.1 21.4h0.7M16.6 21.4h13.7M30.2 21.4h1.4M1.4 22.9h0.7M1.4 31.7h10.1M11.5 31.7h2.2M14.4 31.7h4.3M19.4 31.7h0.7M10.8 33.2h0.7M11.5 33.2h7.9M1.4 34.7h0.7M5.8 53.9h5M10.8 53.9h0.7M11.5 53.9h4.3M15.8 53.9h0.7M17.3 53.9h8.6M25.9 53.9h0.7M27.4 53.9h6.5M33.8 53.9h0.7M35.3 53.9h10.8M46.1 53.9h1.4M48.2 53.9h5M53.3 53.9h0.7M54 53.9h2.2M56.2 53.9h0.7M57.6 53.9h0.7M7.2 55.4h0.7M8.6 55.4h3.6M12.2 55.4h0.7M13.7 55.4h6.5M20.9 55.4h0.7M22.3 55.4h0.7M23.8 55.4h4.3M28.1 55.4h0.7M29.5 55.4h9.4M39.6 55.4h0.7M41 55.4h7.2M48.2 55.4h0.7M49 55.4h7.9M7.2 59.8h2.2M10.1 59.8h0.7M14.4 59.8h2.2M16.6 59.8h0.7M17.3 59.8h7.2M24.5 59.8h0.7M25.2 59.8h7.9M33.1 59.8h0.7M2.9 61.3h2.2M5 61.3h0.7M5.8 61.3h8.6M14.4 61.3h0.7M15.1 61.3h4.3M19.4 61.3h1.4M20.9 61.3h7.9M31 61.3h7.2M38.2 61.3h0.7M38.9 61.3h7.9M46.8 61.3h0.7M2.9 62.8h2.2M5 62.8h0.7M5.8 62.8h8.6M14.4 62.8h0.7M15.1 62.8h4.3M19.4 62.8h1.4M20.9 62.8h6.5M29.5 62.8h7.2M36.7 62.8h0.7M37.4 62.8h8.6M46.1 62.8h0.7M7.2 67.2h4.3M12.2 67.2h0.7M16.6 67.2h7.2M23.8 67.2h1.4M4.3 68.7h7.9M12.2 68.7h0.7M29.5 68.7h0.7M4.3 70.2h3.6M7.9 70.2h0.7M9.4 70.2h6.5M15.8 70.2h0.7M17.3 70.2h9.4M26.6 70.2h0.7M28.1 70.2h2.2M30.2 70.2h0.7M31 70.2h5.8M36.7 70.2h2.2M39.6 70.2h2.2M41.8 70.2h0.7M46.1 70.2h0.7M47.5 70.2h0.7M4.3 71.6h5M9.4 71.6h0.7M10.8 71.6h1.4M15.1 71.6h0.7M2.9 73.1h1.4M7.2 77.6h2.2M10.1 77.6h0.7M18.7 77.6h0.7M19.4 77.6h2.9M22.3 77.6h0.7M23 77.6h4.3M27.4 77.6h0.7M28.8 77.6h0.7M4.3 79h6.5M10.8 79h0.7M4.3 80.5h5M9.4 80.5h0.7M4.3 82h9.4M13.7 82h0.7M15.1 82h6.5M21.6 82h0.7M22.3 82h9.4M31.7 82h0.7M4.3 83.5h13M17.3 83.5h0.7M18 83.5h4.3M22.3 83.5h0.7M23.8 83.5h4.3M28.1 83.5h0.7M29.5 83.5h0.7M7.9 84.9h0.7M8.6 84.9h4.3M13.7 84.9h2.2M21.6 84.9h0.7M23 84.9h0.7M7.2 86.4h6.5M13.7 86.4h0.7M14.4 86.4h8.6M23 86.4h0.7M23.8 86.4h2.9M26.6 86.4h0.7M5.8 87.9h0.7M13 87.9h0.7M13.7 87.9h4.3M18.7 87.9h2.2M25.2 87.9h0.7M26.6 87.9h0.7M7.2 89.4h6.5M13.7 89.4h0.7M14.4 89.4h9.4M23.8 89.4h1.4M5.8 90.9h0.7M4.3 92.3h1.4M2.9 93.8h1.4M5.8 96.8h0.7M8.6 98.2h4.3M13 98.2h0.7M13.7 98.2h2.9M16.6 98.2h1.4M5.8 99.7h13M18.7 99.7h0.7M20.2 99.7h0.7M20.9 99.7h5.8M26.6 99.7h0.7M28.1 99.7h4.3M32.4 99.7h0.7M36 99.7h0.7M7.2 101.2h5M12.2 101.2h0.7M13 101.2h2.2M15.1 101.2h1.4M16.6 101.2h5.8M22.3 101.2h0.7M23.8 101.2h1.4M25.2 101.2h5.8M31 101.2h2.9M5.8 102.7h1.4M4.3 104.2h1.4M2.9 105.6h0.7M8.6 105.6h0.7M9.4 105.6h3.6M13 105.6h0.7M14.4 105.6h0.7M4.3 107.1h5M9.4 107.1h0.7M10.1 107.1h3.6M13.7 107.1h0.7M14.4 107.1h3.6M18 107.1h0.7M8.6 108.6h3.6M2.9 110.1h0.7M7.9 113h4.3M1.4 114.5h0.7M1.4 123.4h7.2M8.6 123.4h0.7M9.4 123.4h4.3M13.7 123.4h0.7M15.1 123.4h2.2M17.3 123.4h1.4M23 123.4h0.7M5 124.9h1.4M6.5 124.9h4.3M10.8 124.9h0.7M5.8 126.3h0.7M4.3 127.8h4.3M8.6 127.8h0.7M9.4 127.8h2.9M12.2 127.8h1.4M4.3 129.3h4.3M8.6 129.3h0.7M9.4 129.3h5M14.4 129.3h1.4M2.9 130.8h0.7M8.6 130.8h0.7M9.4 130.8h3.6M13 130.8h0.7M14.4 130.8h0.7M4.3 132.2h5M9.4 132.2h0.7M10.1 132.2h3.6M13.7 132.2h1.4M15.1 132.2h7.2M23 132.2h4.3M29.5 132.2h3.6M33.1 132.2h0.7M2.9 133.7h0.7M1.4 135.2h0.7M1.4 145.5h3.6M5 145.5h0.7M5.8 145.5h4.3M10.1 145.5h0.7M11.5 145.5h2.2M13.7 145.5h0.7M15.1 145.5h2.9M18 145.5h0.7M19.4 145.5h4.3M23.8 145.5h0.7M25.2 145.5h5M31 145.5h0.7M35.3 145.5h0.7M36.7 145.5h3.6M41 145.5h0.7M45.4 145.5h1.4M51.1 145.5h0.7M5 147h1.4M6.5 147h4.3M10.8 147h0.7M2.9 148.5h4.3M7.2 148.5h0.7M7.9 148.5h3.6M11.5 148.5h0.7M12.2 148.5h2.9M15.1 148.5h0.7M16.6 148.5h5M21.6 148.5h0.7M23 148.5h3.6M26.6 148.5h0.7M1.4 150h0.7M1.4 157.4h3.6M5 157.4h0.7M5.8 157.4h4.3M10.1 157.4h0.7M11.5 157.4h2.2M13.7 157.4h1.4M19.4 157.4h0.7M2.9 158.8h4.3M7.2 158.8h1.4M8.6 158.8h3.6M12.2 158.8h1.4M1.4 160.3h0.7M5.8 167.7h6.5M12.2 167.7h0.7M13 167.7h5M18 167.7h0.7M19.4 167.7h5M24.5 167.7h0.7M25.2 167.7h2.2M27.4 167.7h1.4M29.5 167.7h5M35.3 167.7h0.7M36.7 167.7h7.2M43.9 167.7h0.7M44.6 167.7h5M49.7 167.7h0.7M51.1 167.7h0.7M7.2 169.2h3.6M11.5 169.2h0.7M17.3 169.2h10.8M28.1 169.2h0.7M28.8 169.2h5M33.8 169.2h0.7M5 170.7h0.7M5.8 170.7h3.6M10.1 170.7h2.2M19.4 170.7h0.7M20.9 170.7h0.7M8.6 172.1h3.6M12.2 172.1h0.7M13 172.1h5M18 172.1h0.7M2.9 173.6h0.7M7.9 175.1h3.6M1.4 176.6h0.7M0 178.1h0.7M0 182.5h5.8M6.5 182.5h3.6M10.1 182.5h0.7M10.8 182.5h1.4M12.2 182.5h0.7M13.7 182.5h4.3M18 182.5h1.4M20.2 182.5h5M25.2 182.5h0.7M28.8 182.5h0.7M30.2 182.5h0.7M9.4 184h5M14.4 184h0.7M15.1 184h5M23 184h7.2M30.2 184h0.7M31 184h5M36 184h0.7M37.4 184h1.4M38.9 184h1.4M0 185.4h0.7M9.4 188.4h9.4M19.4 188.4h0.7M23.8 188.4h9.4M33.1 188.4h1.4" stroke="#8a8a8a" stroke-width="1.05" fill="none" opacity="0.75"/><path d="M24.5 0.7h7.2M38.2 2.2h7.2M28.1 3.7h10.1M28.8 61.3h1.4M27.4 62.8h1.4M13.7 68.7h15.8M16.6 84.9h5M21.6 87.9h3.6M27.4 132.2h1.4M13 170.7h6.5" stroke="#8d6653" stroke-width="1.05" fill="none" opacity="0.75"/><path d="M1.4 25.8h2.2M2.2 27.3h0.7M3.6 27.3h5.8M2.2 28.8h0.7M10.1 28.8h0.7M10.8 28.8h4.3M15.1 28.8h0.7M16.6 28.8h0.7M18 28.8h13M2.2 30.3h1.4M1.4 37.7h2.2M2.2 39.1h0.7M3.6 39.1h9.4M2.2 40.6h0.7M8.6 40.6h4.3M13.7 40.6h0.7M15.1 40.6h10.1M2.2 42.1h0.7M8.6 42.1h4.3M13 42.1h0.7M13.7 42.1h3.6M18 42.1h0.7M19.4 42.1h4.3M2.2 43.6h0.7M8.6 43.6h4.3M13 43.6h0.7M13.7 43.6h6.5M20.9 43.6h0.7M22.3 43.6h5.8M2.2 45h0.7M8.6 45h6.5M15.8 45h0.7M17.3 45h8.6M2.2 46.5h0.7M8.6 46.5h6.5M15.1 46.5h0.7M15.8 46.5h8.6M25.2 46.5h0.7M26.6 46.5h8.6M2.2 48h0.7M8.6 48h6.5M15.1 48h0.7M15.8 48h9.4M25.9 48h0.7M27.4 48h8.6M2.2 49.5h0.7M8.6 49.5h6.5M15.1 49.5h0.7M15.8 49.5h9.4M25.9 49.5h0.7M27.4 49.5h8.6M2.2 51h0.7M10.1 51h0.7M10.8 51h5M15.8 51h0.7M16.6 51h2.2M18.7 51h1.4M20.9 51h0.7M22.3 51h12.2M2.2 52.4h1.4M2.9 58.3h1.4M5 58.3h8.6M2.9 65.7h1.4M5 65.7h6.5M2.9 76.1h1.4M5 76.1h2.9M8.6 76.1h2.9M1.4 117.5h2.2M2.2 118.9h0.7M3.6 118.9h4.3M2.2 120.4h0.7M8.6 120.4h4.3M13.7 120.4h0.7M15.1 120.4h10.8M2.2 121.9h1.4M1.4 138.2h2.2M2.2 139.6h0.7M3.6 139.6h5.8M2.2 141.1h0.7M8.6 141.1h4.3M13.7 141.1h0.7M15.1 141.1h4.3M2.2 142.6h0.7M8.6 142.6h2.9M12.2 142.6h0.7M13.7 142.6h8.6M2.2 144.1h1.4M1.4 152.9h2.2M2.2 154.4h0.7M3.6 154.4h5.8M2.2 155.9h1.4M1.4 163.3h2.2M2.2 164.8h0.7M3.6 164.8h4.3M2.2 166.2h1.4M0 181h1.4M2.2 181h2.9" stroke="#4f7241" stroke-width="1.05" fill="none" opacity="0.75"/></svg>
<div class="abs" style="left:868px;top:19px;width:12px;height:719px;background:#232323;border-left:1px solid #303030"></div>
<div class="abs" style="left:868.5px;top:19px;width:11.5px;height:149.5px;background:#464646"></div>
<div class="abs" style="left:869px;top:83px;width:11px;height:1.5px;background:#b0b0b0"></div>
<div class="abs" style="left:873.3px;top:75px;width:4px;height:4.5px;background:#a8a8a8"></div>
<div class="abs" style="left:873.3px;top:84px;width:4px;height:4px;background:#a8a8a8"></div>
</div>
<div id="panel">
<span class="t" style="left:16.4px;top:9.8px;font-size:9.5px;color:#8f8f8f">问题</span>
<span class="t" style="left:55.9px;top:9.8px;font-size:9.5px;color:#8f8f8f">输出</span>
<span class="t" style="left:95.4px;top:9.8px;font-size:9.5px;color:#8f8f8f">调试控制台</span>
<span class="t" style="left:163.2px;top:9.8px;font-size:9.5px;color:#e7e7e7">终端</span>
<span class="t" style="left:202.7px;top:9.8px;font-size:9.5px;color:#8f8f8f">端口</span>
<div class="abs" style="left:161.7px;top:23.2px;width:22.2px;height:1px;background:#e7e7e7"></div>
<svg style="left:650px;top:8px" width="12" height="12" viewBox="0 0 12 12"><path d="M6 0.5v11M0.5 6h11" stroke="#c5c5c5" stroke-width="1.1"/></svg>
<svg style="left:666.5px;top:11.5px" width="7" height="5" viewBox="0 0 7 5"><path d="M0.5 0.7l3 3 3-3" fill="none" stroke="#c5c5c5" stroke-width="1"/></svg>
<svg style="left:683px;top:8.2px" width="13" height="13" viewBox="0 0 13 13"><rect x="0.6" y="0.6" width="11.8" height="11.3" rx="1.8" fill="none" stroke="#c5c5c5" stroke-width="1.1"/><path d="M3 3.8l2.5 2.3L3 8.4M6.5 9h3.5" fill="none" stroke="#c5c5c5" stroke-width="1.1"/></svg>
<span class="t" style="left:699.8px;top:9.6px;font-size:9.8px;letter-spacing:-0.2px;color:#c5c5c5">powershell</span>
<svg style="left:754px;top:8.2px" width="13" height="13" viewBox="0 0 13 13"><rect x="0.6" y="0.6" width="11.8" height="11.3" rx="1.8" fill="none" stroke="#c5c5c5" stroke-width="1.1"/><path d="M6.5 0.6v11.3" stroke="#c5c5c5" stroke-width="1.1"/></svg>
<svg style="left:777px;top:7.5px" width="12" height="14" viewBox="0 0 12 14"><path d="M0.5 2.8h11M4 2.5V1h4v1.5M1.8 3l.7 9.5a1 1 0 0 0 1 .9h5a1 1 0 0 0 1-.9L10.2 3M4.7 5v6M7.3 5v6" fill="none" stroke="#c5c5c5" stroke-width="1.1"/></svg>
<span class="t" style="left:799.5px;top:9px;font-size:11px;color:#c5c5c5;letter-spacing:0.3px;font-weight:bold">···</span>
<div class="abs" style="left:821px;top:7.5px;width:1px;height:14px;background:#5a5a5a"></div>
<svg style="left:832.5px;top:8.7px" width="11" height="11" viewBox="0 0 12 11" preserveAspectRatio="none"><path d="M0.6 3.5V1.6a1 1 0 0 1 1-1H4M8 0.6h2.4a1 1 0 0 1 1 1v1.9M11.4 7.5v1.9a1 1 0 0 1-1 1H8M4 10.4H1.6a1 1 0 0 1-1-1V7.5" fill="none" stroke="#c5c5c5" stroke-width="1.2"/></svg>
<svg style="left:856.5px;top:9.7px" width="9" height="9" viewBox="0 0 9 9"><path d="M0.3 0.3l8.4 8.4M8.7 0.3l-8.4 8.4" stroke="#c5c5c5" stroke-width="1.1"/></svg>
<span class="t" style="left:17.3px;top:40.2px;font-family:'Liberation Mono','Noto Serif CJK SC',monospace;font-size:10.76px;color:#cccccc">(base) PS C:\Users\1\Desktop\demo\<span style="font-family:'Liberation Mono','Noto Serif CJK SC',serif;font-size:11.5px;letter-spacing:1.4px">基础接入</span>demo&gt;</span>
<div class="abs" style="left:868px;top:39px;width:12px;height:135px;border-left:1px solid #333;border-top:1px solid #333;background:#202020"></div>
</div>
<div class="abs" style="left:790px;top:875px;width:387.5px;height:92px;background:#252526;border-radius:4px;box-shadow:0 0 7px 1px rgba(0,0,0,0.6)"></div>
<svg style="left:798.8px;top:886px" width="15" height="15" viewBox="0 0 15 15"><circle cx="7.5" cy="7.5" r="6.6" fill="none" stroke="#3794ff" stroke-width="1.2"/><path d="M7.5 6.5v4.5" stroke="#3794ff" stroke-width="1.3"/><circle cx="7.5" cy="4.3" r="0.9" fill="#3794ff"/></svg>
<span class="t" style="left:817.5px;top:889.3px;font-size:11.17px;color:#cccccc">你的系统上安装了 Docker。是否要为其安装推荐的 来自</span>
<span class="t" style="left:817.5px;top:908.2px;font-size:11.17px;color:#cccccc">Microsoft 的 "Container Tools" 扩展?</span>
<svg style="left:1131.3px;top:887px" width="13.2" height="13.2" viewBox="0 0 18 18"><path d="M6.81 3.31L7.13 0.91L10.87 0.91L11.19 3.31L12.84 4.26L15.07 3.34L16.94 6.57L15.02 8.05L15.02 9.95L16.94 11.43L15.07 14.66L12.84 13.74L11.19 14.69L10.87 17.09L7.13 17.09L6.81 14.69L5.16 13.74L2.93 14.66L1.06 11.43L2.98 9.95L2.98 8.05L1.06 6.57L2.93 3.34L5.16 4.26z" fill="none" stroke="#c5c5c5" stroke-width="1.6" stroke-linejoin="round"/><circle cx="9" cy="9" r="2.3" fill="none" stroke="#c5c5c5" stroke-width="1.5"/></svg>
<svg style="left:1155.5px;top:889px" width="9" height="9" viewBox="0 0 9 9"><path d="M0.3 0.3l8.4 8.4M8.7 0.3l-8.4 8.4" stroke="#c5c5c5" stroke-width="1.1"/></svg>
<div class="abs" style="left:1061px;top:930.5px;width:39.7px;height:23.7px;background:#0e639c;border-radius:2px"></div>
<span class="t" style="left:1070.4px;top:938px;font-size:10.4px;color:#ffffff">安装</span>
<div class="abs" style="left:1109.2px;top:930.5px;width:59.7px;height:23.7px;background:#3a3d41;border-radius:2px"></div>
<span class="t" style="left:1118.2px;top:938px;font-size:10.4px;color:#ffffff">显示建议</span>
<div class="abs" style="left:49px;top:266.4px;width:95px;height:44.6px;border:3px solid #ee5253;border-radius:3px"></div>
<div id="status">
<svg style="left:8.5px;top:3.5px" width="11" height="12" viewBox="0 0 11 12"><path d="M1.1 4.6l3.4 3.4-3.4 3.4M9.6 1l-3.4 3.4 3.4 3.4" fill="none" stroke="#fff" stroke-width="1.4"/></svg>
<svg style="left:35px;top:3.8px" width="12.5" height="12.5" viewBox="0 0 12.5 12.5"><circle cx="6.25" cy="6.25" r="5.5" fill="none" stroke="#fff" stroke-width="1.2"/><path d="M4 4l4.5 4.5M8.5 4L4 8.5" stroke="#fff" stroke-width="1.2"/></svg>
<span class="t" style="left:50.7px;top:5.2px;font-size:9.5px;color:#fff">0</span>
<svg style="left:59.7px;top:3.8px" width="13" height="12" viewBox="0 0 13 12"><path d="M6.5 1l5.7 10.3H0.8z" fill="none" stroke="#fff" stroke-width="1.2" stroke-linejoin="round"/><path d="M6.5 4.5v3.8" stroke="#fff" stroke-width="1.2"/><circle cx="6.5" cy="9.7" r="0.7" fill="#fff"/></svg>
<span class="t" style="left:75.7px;top:5.2px;font-size:9.5px;color:#fff">0</span>
<span class="t" style="left:868px;top:4.7px;font-size:10.3px;color:#fff;letter-spacing:-0.15px">行 16，列 4</span>
<span class="t" style="left:934.2px;top:4.7px;font-size:10.3px;color:#fff;letter-spacing:0px">空格: 2</span>
<span class="t" style="left:978.9px;top:4.7px;font-size:10.3px;color:#fff;letter-spacing:-0.25px">UTF-8</span>
<span class="t" style="left:1019.9px;top:4.7px;font-size:10.3px;color:#fff;letter-spacing:-1px">CRLF</span>
<span class="t" style="left:1075.1px;top:4.7px;font-size:10.3px;color:#fff;letter-spacing:-0.16px">TypeScript</span>
<span class="t" style="left:1057.8px;top:3.6px;font-size:10.5px;color:#fff;font-family:'Liberation Sans',sans-serif;letter-spacing:2.2px">{}</span>
<svg style="left:1135.9px;top:4px" width="15" height="12" viewBox="0 0 15 12"><ellipse cx="7.5" cy="7.7" rx="7.3" ry="4.3" fill="#fff"/><circle cx="5.1" cy="3.1" r="2.3" fill="none" stroke="#fff" stroke-width="1.5"/><circle cx="9.9" cy="3.1" r="2.3" fill="none" stroke="#fff" stroke-width="1.5"/><rect x="3.3" y="5.6" width="8.4" height="3.7" rx="1" fill="#007acc"/><rect x="5.3" y="6.5" width="1.6" height="2" fill="#fff"/><rect x="8.1" y="6.5" width="1.6" height="2" fill="#fff"/></svg>
<svg style="left:1165px;top:3.5px" width="12" height="13" viewBox="0 0 12 13"><path d="M1 9.8c1.1-1 1.3-2 1.3-4.3a3.4 3.4 0 0 1 6.8 0c0 2.3.2 3.3 1.3 4.3zM4.3 10.3a1.5 1.5 0 0 0 2.8 0" fill="none" stroke="#fff" stroke-width="1.3" stroke-linejoin="round"/><circle cx="8.9" cy="2.9" r="2.3" fill="#e8e8e8"/></svg>
</div>
<span class="t" style="left:1112px;top:973.2px;font-size:10.5px;letter-spacing:-0.2px;color:rgba(255,255,255,0.27)">@51CTO博客</span>
<div class="abs" style="left:1183px;top:0;width:1px;height:991px;background:rgba(128,128,128,0.75)"></div>
</body></html>
